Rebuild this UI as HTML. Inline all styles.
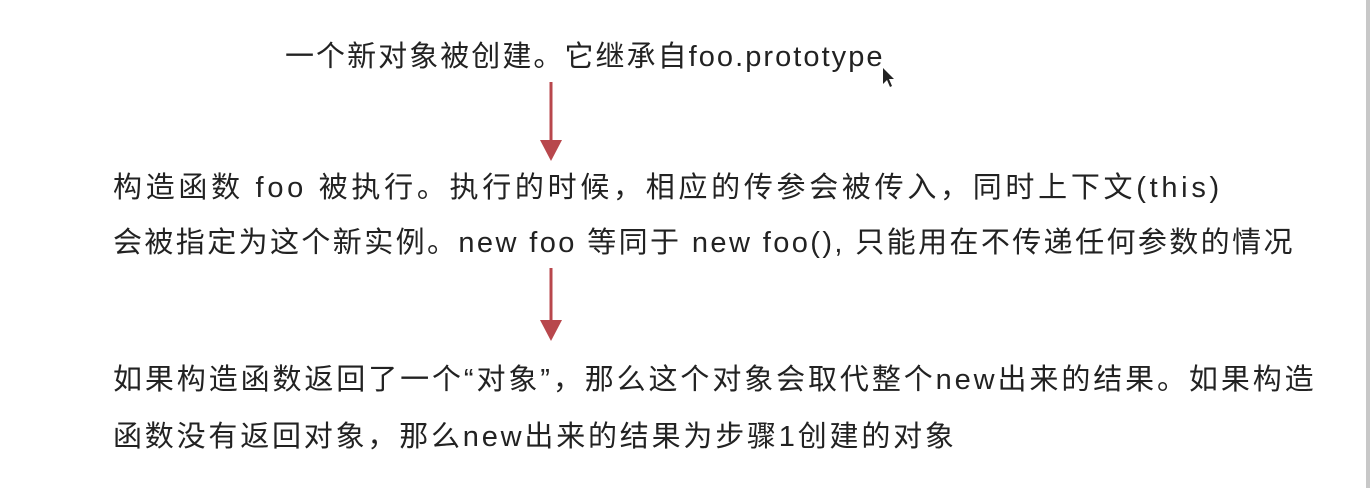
<!DOCTYPE html>
<html><head><meta charset="utf-8"><style>
body{margin:0;width:1370px;height:488px;background:#fff;position:relative;overflow:hidden;font-family:"Liberation Sans","Noto Sans CJK SC",sans-serif;color:#222;}
.t{position:absolute;white-space:nowrap;font-size:29px;line-height:36px;letter-spacing:2px;}
.edge{position:absolute;right:0;top:0;width:4px;height:488px;background:#c8c8c8;}
</style></head><body>
<div class="t" style="left:285px;top:39px;letter-spacing:2.05px">一个新对象被创建。它继承自foo.prototype</div>
<div class="t" style="left:113px;top:170px;letter-spacing:3.7px">构造函数 foo 被执行。执行的时候，相应的传参会被传入，同时上下文(this)</div>
<div class="t" style="left:113px;top:225px;letter-spacing:2.4px">会被指定为这个新实例。new foo 等同于 new foo(), 只能用在不传递任何参数的情况</div>
<div class="t" style="left:113px;top:362px;letter-spacing:2.9px">如果构造函数返回了一个“对象”，那么这个对象会取代整个new出来的结果。如果构造</div>
<div class="t" style="left:113px;top:419px;letter-spacing:2.8px">函数没有返回对象，那么new出来的结果为步骤1创建的对象</div>
<svg style="position:absolute;left:0;top:0" width="1370" height="488">
<line x1="551" y1="82" x2="551" y2="142" stroke="#b8474c" stroke-width="3"/>
<polygon points="540,140 562,140 551,161" fill="#b8474c"/>
<line x1="551" y1="268" x2="551" y2="322" stroke="#b8474c" stroke-width="3"/>
<polygon points="540,320 562,320 551,341" fill="#b8474c"/>
<path d="M883 68 L883 84 L887 80 L890 87 L892 86 L889 79 L894 79 Z" fill="#222"/>
</svg>
<div class="edge"></div>
</body></html>
